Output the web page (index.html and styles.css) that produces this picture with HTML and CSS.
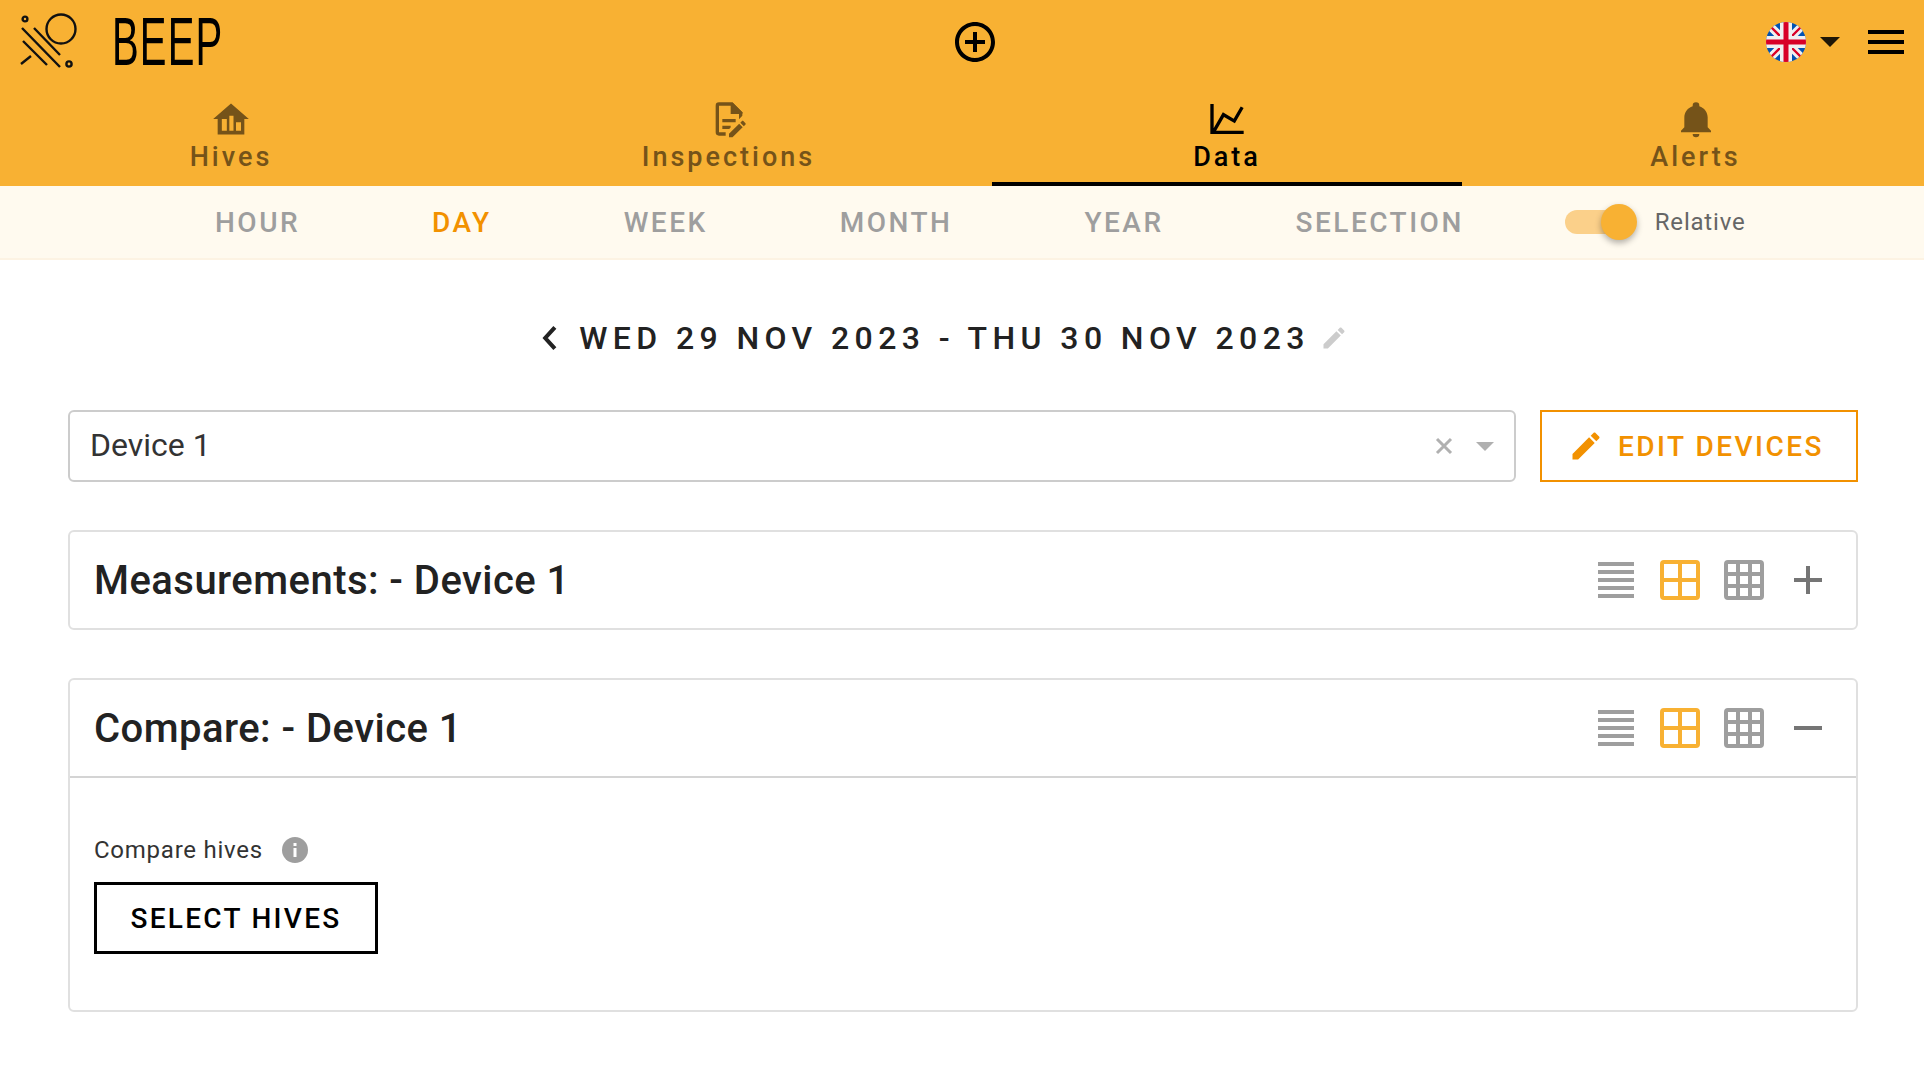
FILE: index.html
```html
<!DOCTYPE html>
<html lang="en">
  <head>
    <meta charset="UTF-8" />
    <meta name="viewport" content="width=device-width, initial-scale=1.0" />
    <title>BEEP - Data</title>
    <link rel="stylesheet" href="styles.css">
  </head>
  <body>
    <header class="toolbar">
      <div class="topbar">
        <div class="brand">
          <svg class="brand-logo" viewBox="0 0 66 84" fill="none" stroke="#111" stroke-width="2.4">
            <circle cx="41" cy="29" r="14.5" />
            <circle cx="5" cy="19" r="2.4" />
            <circle cx="49" cy="64" r="2.6" />
            <path d="M2 28L40 67M14 28L40 55M3 41L27 65M1 64L11 56" />
          </svg>
          <span class="brand-name">BEEP</span>
        </div>
        <svg class="add-icon" viewBox="2 2 20 20">
          <path d="M12 20C7.59 20 4 16.41 4 12S7.59 4 12 4 20 7.59 20 12 16.41 20 12 20M12 2C6.47 2 2 6.47 2 12S6.47 22 12 22 22 17.53 22 12 17.53 2 12 2M13 7H11V11H7V13H11V17H13V13H17V11H13V7Z" />
        </svg>
        <div class="top-actions">
          <svg class="flag" viewBox="0 0 40 40">
            <defs>
              <clipPath id="flagClip"><circle cx="20" cy="20" r="20" /></clipPath>
            </defs>
            <g clip-path="url(#flagClip)">
              <rect width="40" height="40" fill="#0052b4" />
              <path d="M0 0L40 40M40 0L0 40" stroke="#f0f0f0" stroke-width="8" />
              <path d="M3 3L15 15M25 25L37 37M37 3L25 15M15 25L3 37" stroke="#d80027" stroke-width="2.4" />
              <path d="M20 0V40M0 20H40" stroke="#f0f0f0" stroke-width="12" />
              <path d="M20 0V40M0 20H40" stroke="#d80027" stroke-width="5" />
            </g>
          </svg>
          <span class="flag-caret"></span>
          <div class="hamburger"><span></span><span></span><span></span></div>
        </div>
      </div>
      <nav class="tabs">
        <a class="tab">
          <svg viewBox="0 0 24 24" fill-rule="evenodd">
            <path d="M12 2.7L22.7 12H20V21.3H4V12H1.3ZM6.5 12V19H9.5V12ZM11 10V19H13.5V10ZM15 14V19H18V14Z" />
          </svg>
          <span>Hives</span>
        </a>
        <a class="tab tab-inspections">
          <svg viewBox="0 0 24 24">
            <path d="M8,12H16V14H8V12M10,20H6V4H13V9H18V12.1L20,10.1V8L14,2H6A2,2 0 0,0 4,4V20A2,2 0 0,0 6,22H10V20M8,18H12.1L13,17.1V16H8V18M20.2,13C20.3,13 20.5,13.1 20.6,13.2L21.9,14.5C22.1,14.7 22.1,15.1 21.9,15.3L20.9,16.3L18.8,14.2L19.8,13.2C19.9,13.1 20,13 20.2,13M20.2,16.9L14.1,23H12V20.9L18.1,14.8L20.2,16.9Z" />
            <path d="M14 2L20 8V9H14Z" />
          </svg>
          <span>Inspections</span>
        </a>
        <a class="tab tab-active">
          <svg viewBox="0 0 24 24">
            <path d="M16 11.78L20.24 4.45L21.97 5.45L16.74 14.5L10.23 10.75L5.46 19H22V21H2V3H4V17.54L9.5 8L16 11.78Z" />
          </svg>
          <span>Data</span>
        </a>
        <a class="tab tab-alerts">
          <svg viewBox="0 0 24 24">
            <path d="M21 19v1H3v-1l2-2v-6c0-3.1 2.03-5.83 5-6.71V4a2 2 0 0 1 2-2 2 2 0 0 1 2 2v.29c2.97.88 5 3.61 5 6.71v6l2 2m-7 2a2 2 0 0 1-2 2 2 2 0 0 1-2-2" />
          </svg>
          <span>Alerts</span>
        </a>
      </nav>
    </header>

    <div class="period-bar">
      <span class="period">Hour</span>
      <span class="period period-active">Day</span>
      <span class="period">Week</span>
      <span class="period">Month</span>
      <span class="period">Year</span>
      <span class="period">Selection</span>
      <div class="switch">
        <div class="switch-track"><span class="switch-thumb"></span></div>
        <span class="switch-label">Relative</span>
      </div>
    </div>

    <main class="content">
      <div class="date-row">
        <svg class="date-prev" viewBox="0 0 14 24" fill="none" stroke="#222" stroke-width="3.8">
          <path d="M12 2L3 12L12 22" />
        </svg>
        <h1 class="date-title">WED 29 NOV 2023 - THU 30 NOV 2023</h1>
        <svg class="date-edit" viewBox="0 0 24 24">
          <path d="M3 17.25V21h3.75L17.81 9.94l-3.75-3.75L3 17.25zM20.71 7.04c.39-.39.39-1.02 0-1.41l-2.34-2.34c-.39-.39-1.02-.39-1.41 0l-1.83 1.83 3.75 3.75 1.83-1.83z" />
        </svg>
      </div>

      <div class="device-row">
        <div class="device-select">
          <span class="device-value">Device 1</span>
          <svg class="device-clear" viewBox="0 0 18 18" fill="none" stroke="#b0b0b0" stroke-width="3">
            <path d="M2 2L16 16M16 2L2 16" />
          </svg>
          <span class="device-caret"></span>
        </div>
        <button class="btn btn-edit">
          <svg viewBox="0 0 24 24">
            <path d="M3 17.25V21h3.75L17.81 9.94l-3.75-3.75L3 17.25zM20.71 7.04c.39-.39.39-1.02 0-1.41l-2.34-2.34c-.39-.39-1.02-.39-1.41 0l-1.83 1.83 3.75 3.75 1.83-1.83z" />
          </svg>
          EDIT DEVICES
        </button>
      </div>

      <section class="card">
        <div class="card-header">
          <h2 class="card-title">Measurements: - Device 1</h2>
          <div class="card-actions">
            <svg class="view-icon" viewBox="0 0 40 40"><path d="M2 2H38M2 10H38M2 18H38M2 26H38M2 34H38" transform="translate(0 2)" /></svg>
            <svg class="view-icon view-active" viewBox="0 0 40 40"><rect x="2" y="2" width="36" height="36" rx="2" /><path d="M20 2V38M2 20H38" /></svg>
            <svg class="view-icon" viewBox="0 0 40 40"><rect x="2" y="2" width="36" height="36" rx="2" /><path d="M14 2V38M26 2V38M2 14H38M2 26H38" /></svg>
            <svg class="view-icon view-toggle" viewBox="0 0 40 40"><path d="M6 20H34M20 6V34" /></svg>
          </div>
        </div>
      </section>

      <section class="card">
        <div class="card-header card-header-open">
          <h2 class="card-title">Compare: - Device 1</h2>
          <div class="card-actions">
            <svg class="view-icon" viewBox="0 0 40 40"><path d="M2 2H38M2 10H38M2 18H38M2 26H38M2 34H38" transform="translate(0 2)" /></svg>
            <svg class="view-icon view-active" viewBox="0 0 40 40"><rect x="2" y="2" width="36" height="36" rx="2" /><path d="M20 2V38M2 20H38" /></svg>
            <svg class="view-icon" viewBox="0 0 40 40"><rect x="2" y="2" width="36" height="36" rx="2" /><path d="M14 2V38M26 2V38M2 14H38M2 26H38" /></svg>
            <svg class="view-icon view-toggle" viewBox="0 0 40 40"><path d="M6 20H34" /></svg>
          </div>
        </div>
        <div class="card-body">
          <div class="compare-label">
            <span>Compare hives</span>
            <svg class="info-icon" viewBox="0 0 26 26">
              <circle cx="13" cy="13" r="13" fill="#9e9e9e" />
              <rect x="11.5" y="11" width="3" height="9" fill="#fff" />
              <rect x="11.5" y="6" width="3" height="3" fill="#fff" />
            </svg>
          </div>
          <button class="btn btn-select">SELECT HIVES</button>
        </div>
      </section>
    </main>
  </body>
</html>
```

FILE: styles.css
```css
* {
  box-sizing: border-box;
}

body {
  font-family: Roboto, "Liberation Sans", sans-serif;
  margin: 0;
  background-color: #fff;
  color: #222;
}

.toolbar {
  height: 186px;
  background-color: #f8b133;
}

.topbar {
  display: grid;
  grid-template-columns: 935px 40px 1fr;
  align-items: center;
  height: 84px;
  padding-left: 20px;
}

.brand {
  display: flex;
  align-items: center;
}

.brand-logo {
  width: 66px;
  height: 84px;
}

.brand-name {
  font-family: "Liberation Sans", sans-serif;
  font-size: 69px;
  line-height: 84px;
  letter-spacing: 2px;
  color: #000;
  margin-left: 26px;
  transform: scaleX(0.58);
  transform-origin: left center;
}

.add-icon {
  width: 40px;
  height: 40px;
}

.top-actions {
  display: flex;
  align-items: center;
  justify-content: flex-end;
  padding-right: 20px;
}

.flag {
  width: 40px;
  height: 40px;
}

.flag-caret {
  width: 0;
  height: 0;
  margin-left: 14px;
  border-left: 10px solid transparent;
  border-right: 10px solid transparent;
  border-top: 10px solid #1f1606;
}

.hamburger {
  display: flex;
  flex-direction: column;
  gap: 6px;
  width: 36px;
  margin-left: 28px;
}

.hamburger span {
  display: block;
  height: 4px;
  background-color: #000;
}

.tabs {
  display: grid;
  grid-template-columns: 462px 530px 470px 462px;
  height: 102px;
}

.tab {
  display: flex;
  flex-direction: column;
  align-items: center;
  padding-top: 15px;
  font-size: 27px;
  font-weight: 500;
  letter-spacing: 3px;
  line-height: 32px;
  color: #755319;
  fill: #755319;
}

.tab svg {
  width: 40px;
  height: 40px;
  margin-bottom: 2px;
}

.tab-inspections {
  padding-left: 3px;
}

.tab-alerts {
  padding-left: 5px;
}

.tab-active {
  color: #000;
  fill: #000;
  border-bottom: 4px solid #000;
}

.period-bar {
  display: flex;
  align-items: center;
  gap: 132px;
  height: 74px;
  padding: 1px 0 0 215px;
  background-color: #fffaef;
  border-bottom: 2px solid #fdf3e3;
}

.period {
  font-size: 28px;
  font-weight: 500;
  letter-spacing: 2.5px;
  text-transform: uppercase;
  color: #9e9e9e;
}

.period-active {
  color: #f29100;
}

.switch {
  display: flex;
  align-items: center;
  margin-left: -31px;
  margin-top: -1px;
}

.switch-track {
  position: relative;
  width: 58px;
  height: 24px;
  border-radius: 12px;
  background-color: #fbd08a;
}

.switch-thumb {
  position: absolute;
  top: -6px;
  right: -14px;
  width: 36px;
  height: 36px;
  border-radius: 50%;
  background-color: #f8b133;
  box-shadow: 0 3px 6px rgba(0, 0, 0, 0.3);
}

.switch-label {
  margin-left: 32px;
  font-size: 24px;
  letter-spacing: 0.8px;
  color: #666;
}

.content {
  padding: 0 66px 0 68px;
}

.date-row {
  display: flex;
  align-items: center;
  justify-content: center;
  height: 150px;
  padding-top: 5px;
  margin-right: 36px;
}

.date-prev {
  width: 15px;
  height: 26px;
  margin-right: 22px;
}

.date-title {
  margin: 0;
  font-size: 32px;
  font-weight: 500;
  letter-spacing: 5.4px;
  color: #222;
}

.date-edit {
  width: 28px;
  height: 28px;
  margin-left: 10px;
  fill: #ccc;
}

.device-row {
  display: flex;
  gap: 24px;
  height: 72px;
}

.device-select {
  flex: 1;
  display: flex;
  align-items: center;
  padding: 0 20px 0 20px;
  border: 2px solid #ccc;
  border-radius: 6px;
}

.device-value {
  flex: 1;
  font-size: 32px;
  line-height: 36px;
  padding-bottom: 2px;
  color: #333;
}

.device-clear {
  width: 18px;
  height: 18px;
  margin-right: 23px;
}

.device-caret {
  width: 0;
  height: 0;
  border-left: 9px solid transparent;
  border-right: 9px solid transparent;
  border-top: 9px solid #b0b0b0;
}

.btn {
  font-family: Roboto, "Liberation Sans", sans-serif;
  font-size: 28px;
  font-weight: 500;
  letter-spacing: 2.5px;
  background-color: #fff;
  cursor: pointer;
}

.btn-edit {
  display: flex;
  align-items: center;
  justify-content: center;
  gap: 14px;
  width: 318px;
  padding: 0 6px 0 0;
  color: #f29100;
  fill: #f29100;
  border: 2px solid #f29100;
}

.btn-edit svg {
  width: 36px;
  height: 36px;
}

.card {
  margin-top: 48px;
  border: 2px solid #e0e0e0;
  border-radius: 6px;
}

.card-header {
  display: flex;
  align-items: center;
  justify-content: space-between;
  height: 96px;
  padding: 0 28px 0 24px;
}

.card-header-open {
  height: 98px;
  border-bottom: 2px solid #d4d4d4;
}

.card-title {
  margin: 0;
  font-size: 40px;
  font-weight: 500;
  letter-spacing: 0.46px;
  color: #222;
}

.card-actions {
  display: flex;
  gap: 24px;
}

.view-icon {
  width: 40px;
  height: 40px;
  fill: none;
  stroke: #9e9e9e;
  stroke-width: 4;
}

.view-active {
  stroke: #f8b133;
}

.view-toggle {
  stroke: #757575;
}

.card-body {
  padding: 58px 24px 56px;
}

.compare-label {
  display: flex;
  align-items: center;
  gap: 19px;
  font-size: 24px;
  letter-spacing: 0.75px;
  color: #333;
  margin-bottom: 18px;
}

.info-icon {
  width: 26px;
  height: 26px;
}

.btn-select {
  display: block;
  width: 284px;
  height: 72px;
  padding: 0;
  letter-spacing: 2.3px;
  color: #000;
  border: 3px solid #000;
}
```
